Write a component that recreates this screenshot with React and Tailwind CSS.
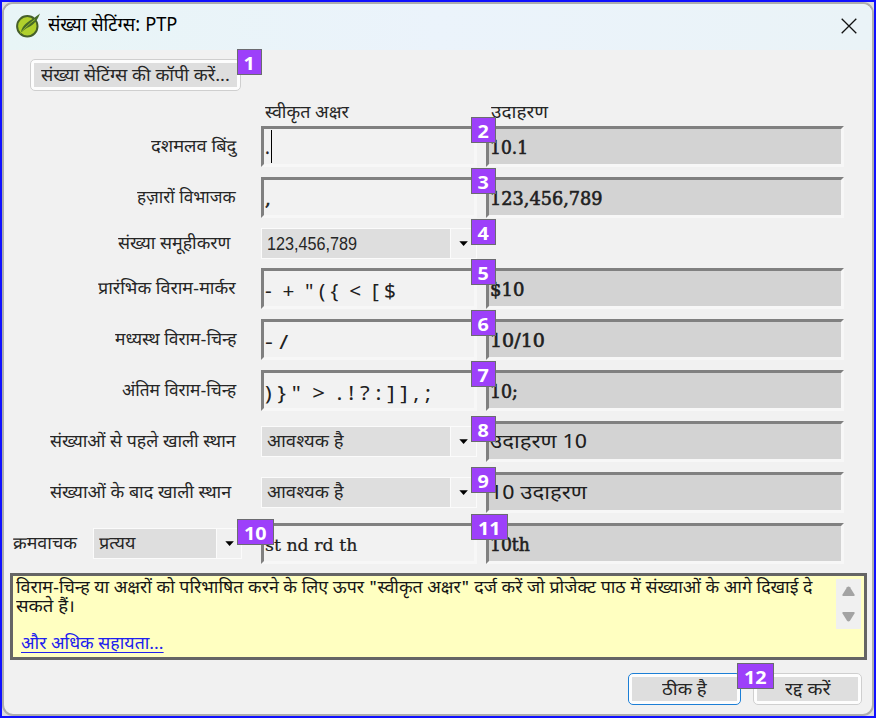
import { useLayoutEffect, useRef } from "react";

const SANS = "font-['Noto_Sans_Devanagari','Noto_Sans','Open_Sans',sans-serif]";
const SERIF = "font-['DejaVu_Serif','Noto_Sans_Devanagari',serif]";

// A single line of text condensed or widened to a fixed width.
function Fit({ w, className = "", inner = "", children }) {
  const ref = useRef(null);
  useLayoutEffect(() => {
    const fit = () => {
      const el = ref.current;
      if (el) el.style.transform = `scaleX(${w / el.offsetWidth})`;
    };
    fit();
    document.fonts?.ready.then(fit);
  }, [w, children]);
  return (
    <span className={`block shrink-0 whitespace-pre leading-6 ${className}`} style={{ width: w }}>
      <span ref={ref} className={`inline-block origin-left ${inner}`}>{children}</span>
    </span>
  );
}

function Badge({ n, className }) {
  return (
    <span className={`absolute z-10 flex h-[26px] items-center justify-center border border-[#6b6b70] bg-[#9d40fa] pt-px font-['Noto_Sans',sans-serif] text-[18px] font-bold leading-none text-white ${className}`}>
      <span className="scale-x-110">{n}</span>
    </span>
  );
}

function Label({ w, inset, children }) {
  return (
    <div className={`flex w-[235px] shrink-0 justify-end ${inset ? "pr-[5px]" : ""}`}>
      <Fit w={w - 1} className="mr-px pt-[3px] text-[17px] text-[#262626]">{children}</Fit>
    </div>
  );
}

function Field({ text, w, caret, gray, look }) {
  const face =
    look === "marks"
      ? "font-['Noto_Sans',sans-serif] text-[19px] pt-[5px]"
      : look === "hindi"
        ? "font-['Noto_Sans_Devanagari','Noto_Sans',sans-serif] text-[19px] pt-1"
        : look === "small"
          ? `${SERIF} pt-[3px] text-[17px] [-webkit-text-stroke:0.2px_#202020]`
          : `${SERIF} pt-[3px] text-[18px] [-webkit-text-stroke:0.6px_#202020]`;
  return (
    <div className={`flex h-[41px] items-center border-b-[3px] border-l-[3px] border-r-[3px] border-t-[3px] border-b-[#f7f7f7] border-l-[#808080] border-r-[#f7f7f7] border-t-[#808080] pl-px ${gray ? "w-[358px] bg-[#d3d3d3]" : "w-[216px] bg-[#f2f2f2]"}`}>
      <Fit w={w} className={`text-[#202020] ${face}`}>{text}</Fit>
      {caret && <span className="ml-px h-[33px] w-px bg-black" />}
    </div>
  );
}

function Combo({ text, w, small, latin }) {
  return (
    <div className={`flex h-[31px] items-stretch border border-[#fbfbfb] bg-[#f0f0f0] ${small ? "w-[149px]" : "w-[216px]"}`}>
      <div className={`flex items-center border-r border-[#fbfbfb] bg-[#dedede] pl-[5px] ${small ? "w-[123px]" : "w-[189px]"}`}>
        <Fit w={w} className={`text-[#262626] ${latin ? "pt-[2px] font-['Liberation_Sans',sans-serif] text-[18px]" : "pt-[3px] text-[17px]"}`}>{text}</Fit>
      </div>
      <div className="flex flex-1 items-center justify-center">
        <svg width="9" height="5" viewBox="0 0 9 5"><path d="M0.3 0.3h8.6L4.6 5z" fill="#000" /></svg>
      </div>
    </div>
  );
}

function Row({ label, lw, inset, n, field, example, ew, look, extra, short }) {
  const spot =
    n === 11
      ? "-top-[4px] left-[469px] w-[37px]"
      : n > 7
        ? "top-0 left-[469px] w-[25px]"
        : "-top-[4px] left-[469px] w-[25px]";
  return (
    <div className={`relative flex items-center ${short ? "h-10" : "h-[51px]"}`}>
      {extra || <Label w={lw} inset={inset}>{label}</Label>}
      <div className="ml-6 w-[216px] shrink-0">{field}</div>
      {example && <div className="ml-[9px]"><Field gray look={look} text={example} w={ew} /></div>}
      <Badge n={n} className={spot} />
    </div>
  );
}

function Button({ primary, w, children, className }) {
  return (
    <div className={`flex items-center justify-center rounded-[5px] border bg-[#fdfdfd] p-[3px] ${primary ? "border-[#1c7fd6]" : "border-[#cfcfcf]"} ${className}`}>
      <div className="flex h-full w-full items-center justify-center bg-[#dedede]">
        <Fit w={w} className="pt-1 text-[17px] text-[#262626]">{children}</Fit>
      </div>
    </div>
  );
}

export default function App() {
  return (
    <div className={`h-[718px] w-[876px] overflow-hidden border-2 border-[#1010ff] bg-[#dcdcdc] ${SANS}`}>
      <div className="flex h-[714px] w-[872px] flex-col overflow-hidden rounded-[11px] border-2 border-[#adadad] bg-[#f1f1f1]">
        <header className="flex h-[46px] shrink-0 items-center bg-gradient-to-r from-[#e8f5f6] via-[#ebf3fb] to-[#eaf3f7] pb-[3px] pl-3">
          <svg width="25" height="25" viewBox="0 0 25 25">
            <circle cx="11.3" cy="13.3" r="10.2" fill="#b0d02c" stroke="#46602a" strokeWidth="2" />
            <path d="M5 19C6 12 13 8 18 5L24 0.5C22 6 18 12 13 14 10 15 8 17 6 19z" fill="#476b28" />
            <path d="M4.5 20.5C9 14.5 13 11 19 6.5" fill="none" stroke="#a8cf2b" strokeWidth="0.8" />
          </svg>
          <Fit w={129} className="ml-[7px] mt-0.5 text-[19px] text-black">संख्या सेटिंग्स: PTP</Fit>
          <svg className="ml-auto mr-[15px]" width="16" height="16" viewBox="0 0 16 16"><path d="M0.7 0.7l14.6 14.6M15.3 0.7L0.7 15.3" stroke="#111" strokeWidth="1.3" /></svg>
        </header>

        <div className="relative ml-[26px] mt-[9px] h-8 w-[211px] shrink-0">
          <Button w={189} className="h-8 w-[211px]">संख्या सेटिंग्स की कॉपी करें...</Button>
          <Badge n={1} className="-top-[10px] left-[207px] w-[25px]" />
        </div>

        <div className="flex h-[30px] shrink-0 items-center pl-[261px] pt-[15px]">
          <Fit w={84} className="text-[17px] text-[#262626]">स्वीकृत अक्षर</Fit>
          <Fit w={57} className="ml-[142px] text-[17px] text-[#262626]">उदाहरण</Fit>
        </div>

        <main className="-ml-0.5 shrink-0">
          <Row label="दशमलव बिंदु" lw={86} n={2} field={<Field text="." w={5} caret />} example="10.1" ew={38} />
          <Row label="हज़ारों विभाजक" lw={100} n={3} field={<Field text="," w={6} />} example="123,456,789" ew={113} />
          <Row short label="संख्या समूहीकरण" lw={114} inset n={4} field={<Combo latin text="123,456,789" w={90} />} />
          <Row label="प्रारंभिक विराम-मार्कर" lw={139} n={5} field={<Field look="marks" text={'-  +  " ( {  <  [ $'} w={131} />} example="$10" ew={34} />
          <Row label="मध्यस्थ विराम-चिन्ह" lw={122} n={6} field={<Field look="marks" text="- /" w={23} />} example="10/10" ew={55} />
          <Row label="अंतिम विराम-चिन्ह" lw={115} n={7} field={<Field look="marks" text={') } "  >  . ! ? : ] ] , ;'} w={166} />} example="10;" ew={28} />
          <Row label="संख्याओं से पहले खाली स्थान" lw={187} n={8} field={<Combo text="आवश्यक है" w={76} />} look="hindi" example="उदाहरण 10" ew={97} />
          <Row label="संख्याओं के बाद खाली स्थान" lw={182} inset n={9} field={<Combo text="आवश्यक है" w={76} />} look="hindi" example="10 उदाहरण" ew={97} />
          <Row
            n={11}
            extra={
              <div className="relative flex w-[235px] shrink-0 items-center pl-[11px]">
                <Fit w={64} className="pt-[3px] text-[17px] text-[#262626]">क्रमवाचक</Fit>
                <div className="ml-4"><Combo small text="प्रत्यय" w={36} /></div>
                <Badge n={10} className="-top-[9px] left-[235px] w-[37px]" />
              </div>
            }
            field={<Field look="small" text="st nd rd th" w={92} />}
            example="10th"
            ew={40}
          />
        </main>

        <section className="ml-[6px] mt-1 flex h-[87px] w-[857px] shrink-0 border-[3px] border-[#656565] bg-[#ffffc1]">
          <div className="pl-[3px] pt-1 text-[17px] text-[#161616]">
            <Fit w={797} className="!leading-[19px]">विराम-चिन्ह या अक्षरों को परिभाषित करने के लिए ऊपर "स्वीकृत अक्षर" दर्ज करें जो प्रोजेक्ट पाठ में संख्याओं के आगे दिखाई दे</Fit>
            <Fit w={59} className="!leading-[19px]">सकते हैं।</Fit>
            <Fit w={143} className="ml-[5px] mt-[17px] !leading-[21px] text-[#2020ee]" inner="underline underline-offset-[3px] [text-decoration-skip-ink:none]">और अधिक सहायता...</Fit>
          </div>
          <div className="ml-auto mr-[3px] mt-[3px] flex h-[50px] w-[25px] flex-col items-center justify-center gap-4 bg-[#f0f0f0]">
            <svg width="13" height="10" viewBox="0 0 13 10"><path d="M5 1.2Q6.5-.4 8 1.2L12.5 8.5V10H.5V8.5z" fill="#a3a3a3" /></svg>
            <svg width="13" height="10" viewBox="0 0 13 10"><path d="M5 8.8Q6.5 10.4 8 8.8L12.5 1.5V0H.5V1.5z" fill="#a3a3a3" /></svg>
          </div>
        </section>

        <footer className="relative ml-[624px] mt-[13px] flex gap-3">
          <Button primary w={45} className="h-8 w-[113px]">ठीक है</Button>
          <Button w={46} className="h-8 w-[109px]">रद्द करें</Button>
          <Badge n={12} className="-top-[10px] left-[109px] w-[37px]" />
        </footer>
      </div>
    </div>
  );
}
